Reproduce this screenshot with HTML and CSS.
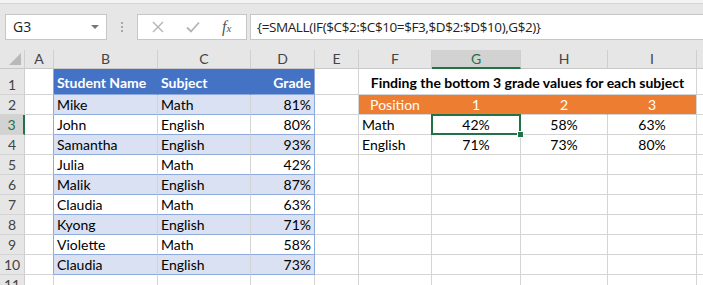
FILE: index.html
```html
<!DOCTYPE html>
<html lang="en">
<head>
    <meta charset="UTF-8">
    <title>Bottom 3 grades - SMALL IF</title>
    <link rel="stylesheet" href="styles.css">
</head>
<body>

    <div class="ribbon-edge"></div>
    <div class="toolbar">
        <div class="namebox">G3<span class="caret"></span></div>
        <div class="grip"><span></span><span></span><span></span></div>
        <div class="fxbox">
            <svg class="icon" width="12" height="12" viewBox="0 0 12 12">
                <path d="M1 1 L11 11 M11 1 L1 11" stroke="#b4b4b4" stroke-width="1.4" fill="none"/>
            </svg>
            <svg class="icon" width="14" height="12" viewBox="0 0 14 12">
                <path d="M1 6.5 L5 10.5 L13 1.5" stroke="#b4b4b4" stroke-width="1.8" fill="none"/>
            </svg>
            <span class="fx">f<small>x</small></span>
        </div>
        <div class="formula">{=SMALL(IF($C$2:$C$10=$F3,$D$2:$D$10),G$2)}</div>
    </div>

    <div class="sheet">
        <!-- column headers -->
        <div class="ch corner"><span class="tri"></span></div>
        <div class="ch">A</div>
        <div class="ch">B</div>
        <div class="ch">C</div>
        <div class="ch">D</div>
        <div class="ch">E</div>
        <div class="ch">F</div>
        <div class="ch ch-sel">G</div>
        <div class="ch">H</div>
        <div class="ch">I</div>
        <div class="ch"></div>

        <!-- row 1 -->
        <div class="rh tall">1</div>
        <div class="c edge"></div>
        <div class="c th">Student Name</div>
        <div class="c th">Subject</div>
        <div class="c th num tend">Grade</div>
        <div class="c"></div>
        <div class="c title">Finding the bottom 3 grade values for each subject</div>
        <div class="c"></div>

        <!-- row 2 -->
        <div class="rh">2</div>
        <div class="c edge"></div>
        <div class="c tb band">Mike</div>
        <div class="c tb band">Math</div>
        <div class="c tb band num tend">81%</div>
        <div class="c"></div>
        <div class="c pos ctr">Position</div>
        <div class="c pos ctr">1</div>
        <div class="c pos ctr">2</div>
        <div class="c pos ctr last">3</div>
        <div class="c"></div>

        <!-- row 3 -->
        <div class="rh rh-sel">3</div>
        <div class="c edge"></div>
        <div class="c tb">John</div>
        <div class="c tb">English</div>
        <div class="c tb num tend">80%</div>
        <div class="c"></div>
        <div class="c">Math</div>
        <div class="c ctr selected">42%</div>
        <div class="c ctr">58%</div>
        <div class="c ctr">63%</div>
        <div class="c"></div>

        <!-- row 4 -->
        <div class="rh">4</div>
        <div class="c edge"></div>
        <div class="c tb band">Samantha</div>
        <div class="c tb band">English</div>
        <div class="c tb band num tend">93%</div>
        <div class="c"></div>
        <div class="c">English</div>
        <div class="c ctr">71%</div>
        <div class="c ctr">73%</div>
        <div class="c ctr">80%</div>
        <div class="c"></div>

        <!-- row 5 -->
        <div class="rh">5</div>
        <div class="c edge"></div>
        <div class="c tb">Julia</div>
        <div class="c tb">Math</div>
        <div class="c tb num tend">42%</div>
        <div class="c"></div>
        <div class="c"></div>
        <div class="c"></div>
        <div class="c"></div>
        <div class="c"></div>
        <div class="c"></div>

        <!-- row 6 -->
        <div class="rh">6</div>
        <div class="c edge"></div>
        <div class="c tb band">Malik</div>
        <div class="c tb band">English</div>
        <div class="c tb band num tend">87%</div>
        <div class="c"></div>
        <div class="c"></div>
        <div class="c"></div>
        <div class="c"></div>
        <div class="c"></div>
        <div class="c"></div>

        <!-- row 7 -->
        <div class="rh">7</div>
        <div class="c edge"></div>
        <div class="c tb">Claudia</div>
        <div class="c tb">Math</div>
        <div class="c tb num tend">63%</div>
        <div class="c"></div>
        <div class="c"></div>
        <div class="c"></div>
        <div class="c"></div>
        <div class="c"></div>
        <div class="c"></div>

        <!-- row 8 -->
        <div class="rh">8</div>
        <div class="c edge"></div>
        <div class="c tb band">Kyong</div>
        <div class="c tb band">English</div>
        <div class="c tb band num tend">71%</div>
        <div class="c"></div>
        <div class="c"></div>
        <div class="c"></div>
        <div class="c"></div>
        <div class="c"></div>
        <div class="c"></div>

        <!-- row 9 -->
        <div class="rh">9</div>
        <div class="c edge"></div>
        <div class="c tb">Violette</div>
        <div class="c tb">Math</div>
        <div class="c tb num tend">58%</div>
        <div class="c"></div>
        <div class="c"></div>
        <div class="c"></div>
        <div class="c"></div>
        <div class="c"></div>
        <div class="c"></div>

        <!-- row 10 -->
        <div class="rh">10</div>
        <div class="c edge"></div>
        <div class="c tb band">Claudia</div>
        <div class="c tb band">English</div>
        <div class="c tb band num tend">73%</div>
        <div class="c"></div>
        <div class="c"></div>
        <div class="c"></div>
        <div class="c"></div>
        <div class="c"></div>
        <div class="c"></div>

        <!-- row 11 -->
        <div class="rh">11</div>
        <div class="c"></div>
        <div class="c"></div>
        <div class="c"></div>
        <div class="c"></div>
        <div class="c"></div>
        <div class="c"></div>
        <div class="c"></div>
        <div class="c"></div>
        <div class="c"></div>
        <div class="c"></div>
    </div>

</body>
</html>
```

FILE: styles.css
```css
body {
    margin: 0;
    background: white;
    font-family: Lato, 'Liberation Sans', sans-serif;
    overflow: hidden;
}

/* formula bar */

.ribbon-edge {
    height: 3px;
    background: #f3f3f3;
    border-bottom: 1px solid #d6d6d6;
}

.toolbar {
    display: flex;
    align-items: flex-start;
    height: 46px;
    box-sizing: border-box;
    padding: 10px 0 0 5px;
    background: #e6e6e6;
}

.namebox {
    position: relative;
    width: 102px;
    height: 26px;
    box-sizing: border-box;
    background: white;
    border: 1px solid #c6c6c6;
    padding-left: 7px;
    font-family: 'Open Sans', sans-serif;
    font-size: 14px;
    line-height: 24px;
    color: #222;
}

.caret {
    position: absolute;
    right: 7px;
    top: 10px;
    border-left: 4px solid transparent;
    border-right: 4px solid transparent;
    border-top: 4px solid #777;
}

.grip {
    width: 30px;
    height: 26px;
    display: flex;
    flex-direction: column;
    align-items: center;
    justify-content: center;
    gap: 2px;
}

.grip span {
    width: 2px;
    height: 2px;
    background: #a8a8a8;
}

.fxbox {
    width: 110px;
    height: 26px;
    box-sizing: border-box;
    background: white;
    border: 1px solid #c6c6c6;
    display: flex;
    align-items: center;
    padding-left: 14px;
    gap: 22px;
}

.fx {
    font-family: 'Liberation Serif', serif;
    font-style: italic;
    font-size: 16px;
    color: #555;
}

.fx small {
    font-size: 11px;
}

.formula {
    flex: 1;
    height: 26px;
    margin-left: 3px;
    margin-right: -2px;
    box-sizing: border-box;
    background: white;
    border: 1px solid #c6c6c6;
    padding-left: 6px;
    font-family: 'Open Sans', sans-serif;
    font-size: 13.5px;
    letter-spacing: -0.4px;
    line-height: 24px;
    color: #222;
}

/* sheet grid */

.sheet {
    display: grid;
    grid-template-columns: 25px 29px 104px 93px 64px 44px 73px 89px 87px 89px 1fr;
    grid-template-rows: 19px 26px repeat(10, 20px) 20px;
    font-size: 14px;
    color: black;
}

.ch, .rh, .c {
    box-sizing: border-box;
    border-right: 1px solid #d4d4d4;
    border-bottom: 1px solid #d4d4d4;
    display: flex;
    align-items: flex-end;
    line-height: 18px;
    white-space: nowrap;
    overflow: hidden;
}

.ch {
    background: #e6e6e6;
    border-right-color: #cfcfcf;
    border-bottom-color: #c8c8c8;
    justify-content: center;
    align-items: center;
    color: #444;
    font-size: 14px;
}

.ch-sel {
    background: #d2d2d2;
    color: #217346;
    border-bottom: 2px solid #217346;
}

.corner {
    position: relative;
}

.tri {
    position: absolute;
    right: 3px;
    bottom: 3px;
    border-left: 12px solid transparent;
    border-bottom: 12px solid #b9b9b9;
}

.rh {
    background: #e6e6e6;
    border-right-color: #cfcfcf;
    border-bottom-color: #d4d4d4;
    justify-content: center;
    color: #444;
    font-size: 14px;
}

.rh-sel {
    background: #d2d2d2;
    color: #217346;
    border-right: 2px solid #217346;
}

.c {
    padding: 0 3px;
}

.edge {
    border-right-color: #8ea9db;
}

.th {
    background: #4472c4;
    color: white;
    font-weight: bold;
    border-right-color: #4472c4;
    border-bottom-color: #8ea9db;
    padding-bottom: 2px;
}

.tb {
    border-bottom-color: #8ea9db;
}

.band {
    background: #d9e1f2;
}

.tend {
    border-right-color: #8ea9db;
}

.num {
    justify-content: flex-end;
}

.ctr {
    justify-content: center;
}

.title {
    grid-column: span 4;
    justify-content: center;
    font-weight: bold;
    padding-bottom: 2px;
}

.pos {
    background: #ed7d31;
    color: white;
    border-right-color: #ed7d31;
}

.pos.last {
    border-right-color: #d4d4d4;
}

.selected {
    position: relative;
    overflow: visible;
}

.selected::after {
    content: "";
    position: absolute;
    top: -1px;
    left: -1px;
    right: -1px;
    bottom: -1px;
    border: 2px solid #217346;
}

.selected::before {
    content: "";
    position: absolute;
    right: -4px;
    bottom: -4px;
    width: 5px;
    height: 5px;
    background: #217346;
    border: 1px solid white;
    z-index: 1;
}
```
